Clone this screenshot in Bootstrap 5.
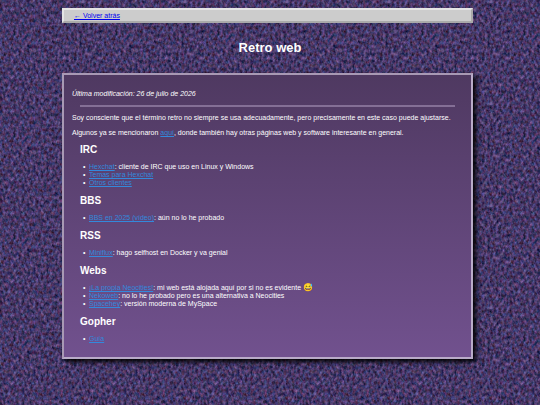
<!DOCTYPE html>
<html lang="es">
<head>
<meta charset="utf-8">
<meta name="viewport" content="width=device-width, initial-scale=1">
<title>Retro web</title>
<link href="https://cdn.jsdelivr.net/npm/bootstrap@5.3.0/dist/css/bootstrap.min.css" rel="stylesheet">
<style>
body {
  font: 7px/8px "Liberation Sans", Arial, sans-serif;
  color: #fff;
  background: #44365f url("data:image/svg+xml,%3Csvg xmlns='http://www.w3.org/2000/svg' width='102' height='102'%3E%3Cfilter id='n' x='0' y='0' width='100%25' height='100%25' color-interpolation-filters='sRGB'%3E%3CfeTurbulence type='fractalNoise' baseFrequency='.36 .26' numOctaves='3' seed='11' stitchTiles='stitch'/%3E%3CfeColorMatrix values='.36 0 0 .45 -.13 .06 .2 0 .38 -.1 0 .2 .2 .55 -.07 0 0 0 0 1'/%3E%3C/filter%3E%3Crect width='102' height='102' filter='url(%23n)'/%3E%3C/svg%3E");
}
.page { padding: 8px 67px 16px 62px; }
.topbar { background: #ccc; border: 2px solid; border-color: #e4e4e4 #aaa #aaa #e4e4e4; padding: 2px 10px 1px; }
.topbar a { color: #00e; }
.page-title { font-size: 13px; line-height: 16px; font-weight: 700; margin: 17px -5px 17px 0; }
.panel {
  border: 2px solid;
  border-color: #a899b4 #b9abc8 #b9abc8 #a899b4;
  background: linear-gradient(#4f3961, #71518e);
  box-shadow: 3px 3px 5px #000;
  padding: 15px 8px 14px;
}
.panel p { margin: 0 0 7px; }
.panel a { color: #3389dc; }
.panel hr { margin: 7px 8px 7px; border: 0; height: 2px; background: #846f96; opacity: 1; }
.panel h2 { font-size: 10px; line-height: 12px; font-weight: 700; margin: 0 8px 7px; }
.panel ul { margin: 0 0 8px; padding-left: 11px; list-style: none; }
.panel li::before { content: "•"; display: inline-block; width: 6px; }
.panel section:last-child ul { margin-bottom: 0; }
.emoji { font-size: 8px; line-height: 1; }
</style>
<script src="https://cdn.jsdelivr.net/npm/bootstrap@5.3.0/dist/js/bootstrap.bundle.min.js"></script>
</head>
<body>
<div class="page">
  <nav class="topbar d-flex"><a href="#">← Volver atrás</a></nav>
  <h1 class="page-title text-center">Retro web</h1>
  <main class="panel">
    <div><em>Última modificación: 26 de julio de 2026</em></div>
    <hr>
    <p>Soy consciente que el término retro no siempre se usa adecuadamente, pero precisamente en este caso puede ajustarse.</p>
    <p>Algunos ya se mencionaron <a href="#">aquí</a>, donde también hay otras páginas web y software interesante en general.</p>
    <section>
      <h2>IRC</h2>
      <ul>
        <li><a href="#">Hexchat</a>: cliente de IRC que uso en Linux y Windows</li>
        <li><a href="#">Temas para Hexchat</a></li>
        <li><a href="#">Otros clientes</a></li>
      </ul>
    </section>
    <section>
      <h2>BBS</h2>
      <ul>
        <li><a href="#">BBS en 2025 (vídeo)</a>: aún no lo he probado</li>
      </ul>
    </section>
    <section>
      <h2>RSS</h2>
      <ul>
        <li><a href="#">Miniflux</a>: hago selfhost en Docker y va genial</li>
      </ul>
    </section>
    <section>
      <h2>Webs</h2>
      <ul>
        <li><a href="#">¡La propia Neocities!</a>: mi web está alojada aquí por si no es evidente <span class="emoji">😅</span></li>
        <li><a href="#">Nekoweb</a>: no lo he probado pero es una alternativa a Neocities</li>
        <li><a href="#">Spacehey</a>: versión moderna de MySpace</li>
      </ul>
    </section>
    <section>
      <h2>Gopher</h2>
      <ul>
        <li><a href="#">Guía</a></li>
      </ul>
    </section>
  </main>
</div>
</body>
</html>
